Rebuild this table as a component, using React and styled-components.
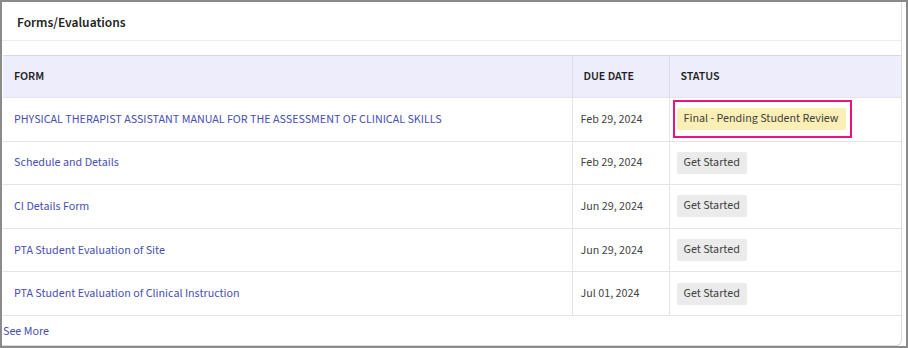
import React from "react";
import styled, { createGlobalStyle } from "styled-components";

const Global = createGlobalStyle`
  html, body { margin: 0; padding: 0; background: #ffffff; }
  body { font-family: "Source Sans 3", "Lato", sans-serif; }
  * { box-sizing: border-box; }
`;

const Frame = styled.div`
  width: 908px;
  height: 348px;
  border: 2px solid #8a8a8a;
  background: #ffffff;
  overflow: hidden;
`;

const Card = styled.section`
  height: 100%;
  margin-right: 4px;
  border-right: 1px solid #dcdcdc;
  border-bottom: 1px solid #dcdcdc;
  border-bottom-right-radius: 6px;
  display: flex;
  flex-direction: column;
`;

const Title = styled.h2`
  margin: 0;
  height: 39px;
  padding: 12px 0 0 15px;
  font-size: 13.5px;
  line-height: 18px;
  font-weight: 600;
  color: #222222;
  border-bottom: 1px solid #ececec;
`;

const Table = styled.table`
  margin: 14px 0 0 1px;
  width: calc(100% - 1px);
  border-collapse: collapse;
  font-size: 12px;
`;

const HeadCell = styled.th`
  background: #eeedfb;
  height: 42px;
  text-align: left;
  font-weight: 600;
  font-size: 12px;
  color: #1f1f1f;
  padding: 0 11px;
  border-top: 1px solid #d9d9e6;
  border-bottom: 1px solid #e2e2ea;
  border-left: ${(p) => (p.$first ? "none" : "1px solid #dddde6")};
  width: ${(p) => p.$w || "auto"};
`;

const Cell = styled.td`
  height: 43.6px;
  padding: 0 ${(p) => p.$pad || "11px"};
  border-bottom: 1px solid #e4e4e4;
  border-left: ${(p) => (p.$first ? "none" : "1px solid #e4e4e4")};
  color: #444444;
  vertical-align: middle;
`;

const DateCell = styled(Cell)`
  padding: 0 8px;
`;

const FormLink = styled.a`
  color: #4a4fb4;
  text-decoration: none;
  font-size: 12px;
`;

const Highlight = styled.span`
  display: inline-flex;
  border: 2px solid #e8157f;
  padding: 6px 4px 6px 2px;
`;

const Badge = styled.span`
  display: inline-block;
  padding: 3px 7px;
  border-radius: 2px;
  font-size: 12px;
  line-height: 16px;
  color: #3f3f3f;
  background: ${(p) => (p.$tone === "final" ? "#fbefb5" : "#ebebeb")};
`;

const SeeMore = styled.a`
  display: block;
  margin: 8px 0 0 1px;
  color: #4a4fb4;
  font-size: 12px;
  line-height: 16px;
  text-decoration: none;
`;

const rows = [
  { form: "PHYSICAL THERAPIST ASSISTANT MANUAL FOR THE ASSESSMENT OF CLINICAL SKILLS", due: "Feb 29, 2024", status: "Final - Pending Student Review", final: true },
  { form: "Schedule and Details", due: "Feb 29, 2024", status: "Get Started" },
  { form: "CI Details Form", due: "Jun 29, 2024", status: "Get Started" },
  { form: "PTA Student Evaluation of Site", due: "Jun 29, 2024", status: "Get Started" },
  { form: "PTA Student Evaluation of Clinical Instruction", due: "Jul 01, 2024", status: "Get Started" },
];

export default function App() {
  return (
    <>
      <Global />
      <Frame>
        <Card>
          <Title>Forms/Evaluations</Title>
          <Table>
            <thead>
              <tr>
                <HeadCell $first>FORM</HeadCell>
                <HeadCell $w="97px">DUE DATE</HeadCell>
                <HeadCell $w="232px">STATUS</HeadCell>
              </tr>
            </thead>
            <tbody>
              {rows.map((r) => (
                <tr key={r.form}>
                  <Cell $first>
                    <FormLink href="#">{r.form}</FormLink>
                  </Cell>
                  <DateCell>{r.due}</DateCell>
                  <Cell $pad={r.final ? "3px" : "7px"}>
                    {r.final ? (
                      <Highlight>
                        <Badge $tone="final">{r.status}</Badge>
                      </Highlight>
                    ) : (
                      <Badge>{r.status}</Badge>
                    )}
                  </Cell>
                </tr>
              ))}
            </tbody>
          </Table>
          <SeeMore href="#">See More</SeeMore>
        </Card>
      </Frame>
    </>
  );
}
